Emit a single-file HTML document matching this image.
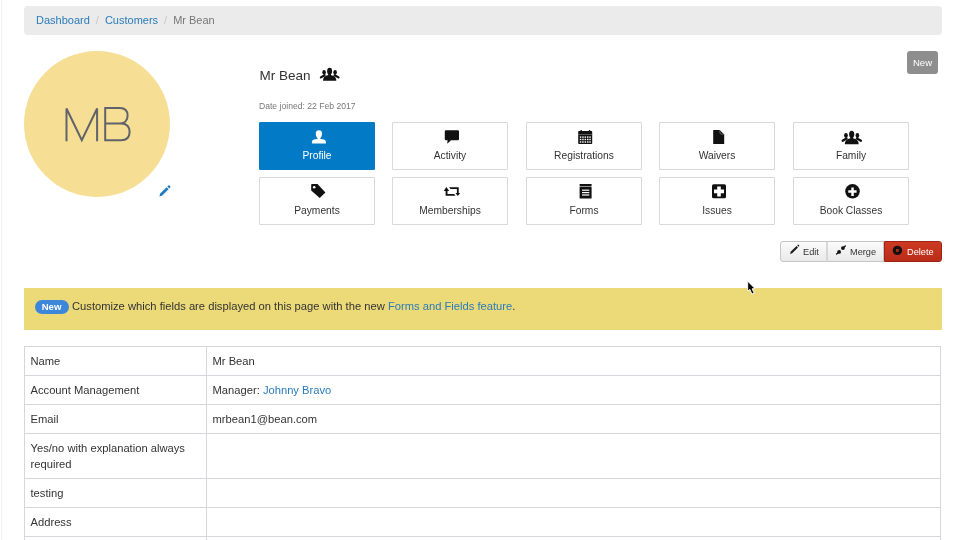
<!DOCTYPE html>
<html><head><meta charset="utf-8">
<style>
*{margin:0;padding:0;box-sizing:border-box;}
html,body{width:960px;height:540px;overflow:hidden;background:#fff;}
body{font-family:"Liberation Sans",sans-serif;color:#333;position:relative;will-change:transform;background:transparent;}
.abs{position:absolute;}
.leftline{left:1px;top:0;width:1px;height:540px;background:#f1f1f4;}
.crumb{left:24px;top:6px;width:918px;height:28.5px;background:#ebebeb;border-radius:4px;font-size:11px;line-height:28px;padding-left:12px;white-space:nowrap;}
.crumb a{color:#2a7cba;text-decoration:none;}
.crumb .sep{color:#c8c8c8;padding:0 6px;}
.crumb .act{color:#777;}
.avatar{left:24px;top:51px;width:146px;height:146px;border-radius:50%;background:#f7de95;}
.name{left:259.5px;top:67.5px;font-size:13.5px;color:#333;line-height:16px;}
.joined{left:259px;top:101px;font-size:8.6px;color:#777;line-height:10px;}
.tile{width:116px;height:48px;border:1px solid #d9d9d9;border-radius:1px;box-shadow:0 0 0.6px #e4e4e4;background:#fff;text-align:center;font-size:10.25px;color:#333;}
.tile .lbl{position:absolute;left:0;right:0;top:27px;line-height:12px;}
.tile svg{position:absolute;}
.tile.on{background:#037ac6;border-color:#037ac6;color:#fff;}
.newbtn{left:907px;top:51px;width:31px;height:23px;background:#8e8e8e;border-radius:3px;color:#fff;font-size:9.6px;text-align:center;line-height:24px;}
.btn{position:absolute;top:241px;height:21px;font-size:9.2px;line-height:20px;color:#333;}
.alert{left:24px;top:288px;width:918px;height:42px;background:#ecd978;font-size:11.2px;line-height:42px;color:#333;padding-left:48px;white-space:nowrap;}
.alert span.t{position:absolute;left:48px;top:11px;line-height:14px;}
.alert a{color:#2a7cba;text-decoration:none;}
.badge{left:34.5px;top:299.5px;width:34px;height:14.5px;border-radius:7.5px;background:#3c87d9;color:#fff;font-size:9.6px;font-weight:bold;text-align:center;line-height:13px;}
table{position:absolute;left:24px;top:346px;width:917px;border-collapse:collapse;font-size:11.2px;color:#333;}
td{border:1px solid #d6d6dc;padding:1px 6px 0 5.5px;vertical-align:middle;height:29px;line-height:15.4px;}
td.k{width:182px;}
td a{color:#2a7cba;text-decoration:none;}
</style></head><body>
<div class="abs leftline"></div>
<div class="abs crumb"><a>Dashboard</a><span class="sep">/</span><a>Customers</a><span class="sep">/</span><span class="act">Mr Bean</span></div>

<div class="abs avatar"></div>
<svg class="abs" style="left:0;top:0" width="200" height="200" viewBox="0 0 200 200"><g fill="none" stroke="#606369" stroke-width="2" stroke-linejoin="miter"><path d="M66.5 141.3 V108.5 L81.8 140.3 L97.1 108.5 V141.3"/><path d="M105.2 123.4 H120 C125.5 123.4 127.6 119.5 127.6 115.6 C127.6 111 125 108.1 120 108.1 H105.2 V140.3 H121 C126.8 140.3 129.6 137 129.6 132 C129.6 127 126.8 123.4 121 123.4"/></g></svg>
<svg class="abs" style="left:150px;top:180px" width="30" height="20" viewBox="0 0 30 20"><g fill="#1f7ac2"><path d="M9.4 16.4 L10.2 13.6 L16.6 7.2 L18.6 9.2 L12.2 15.6 Z"/><path d="M17.3 6.5 L18.3 5.5 Q18.9 5 19.5 5.6 L20.2 6.3 Q20.7 6.9 20.2 7.5 L19.3 8.5 Z"/></g></svg>

<div class="abs name">Mr Bean</div>
<svg class="abs" style="left:315px;top:64px" width="30" height="20" viewBox="0 0 30 20"><g fill="#111"><ellipse cx="14.6" cy="7.2" rx="2.5" ry="3.4"/><rect x="13.2" y="9" width="2.8" height="3"/><path d="M8 16.8 Q8 12.2 12.5 11.3 L16.7 11.3 Q21.3 12.2 21.3 16.8 Z"/><ellipse cx="9.1" cy="8.3" rx="1.8" ry="2.4"/><ellipse cx="20.1" cy="8.3" rx="1.8" ry="2.4"/></g><g stroke="#111" stroke-width="2.2" stroke-linecap="round"><path d="M5.9 13.4 L9.6 11.2"/><path d="M23.5 13.4 L19.6 11.2"/></g></svg>
<div class="abs joined">Date joined: 22 Feb 2017</div>

<div class="abs newbtn">New</div>

<!-- tiles row1 -->
<div class="abs tile on" style="left:259px;top:122px"><div class="lbl">Profile</div></div>
<div class="abs tile" style="left:392px;top:122px"><div class="lbl">Activity</div></div>
<div class="abs tile" style="left:526px;top:122px"><div class="lbl">Registrations</div></div>
<div class="abs tile" style="left:659px;top:122px"><div class="lbl">Waivers</div></div>
<div class="abs tile" style="left:793px;top:122px"><div class="lbl">Family</div></div>

<!-- tiles row2 -->
<div class="abs tile" style="left:259px;top:177px"><div class="lbl">Payments</div></div>
<div class="abs tile" style="left:392px;top:177px"><div class="lbl">Memberships</div></div>
<div class="abs tile" style="left:526px;top:177px"><div class="lbl">Forms</div></div>
<div class="abs tile" style="left:659px;top:177px"><div class="lbl">Issues</div></div>
<div class="abs tile" style="left:793px;top:177px"><div class="lbl">Book Classes</div></div>



<!-- button group -->
<div class="btn" style="left:780px;width:47px;border:1px solid #c6c6c6;border-radius:3px 0 0 3px;background:linear-gradient(#fbfbfb,#e9e9e9);padding-left:22px;">Edit</div>
<div class="btn" style="left:826px;width:58px;border:1px solid #c6c6c6;border-left:2px solid #d6d6d6;background:linear-gradient(#fbfbfb,#e9e9e9);padding-left:22px;">Merge</div>
<div class="btn" style="left:884px;width:58px;border:1px solid #9e2315;border-radius:0 3px 3px 0;background:linear-gradient(#cd3a22,#b92d19);color:#fff;padding-left:22px;">Delete</div>

<div class="abs alert"><span class="t">Customize which fields are displayed on this page with the new <a>Forms and Fields feature</a>.</span></div>
<div class="abs badge">New</div>

<table>
<tr><td class="k">Name</td><td>Mr Bean</td></tr>
<tr><td class="k">Account Management</td><td>Manager: <a>Johnny Bravo</a></td></tr>
<tr><td class="k">Email</td><td>mrbean1@bean.com</td></tr>
<tr><td class="k" style="height:45px">Yes/no with explanation always required</td><td></td></tr>
<tr><td class="k">testing</td><td></td></tr>
<tr><td class="k">Address</td><td></td></tr>
<tr><td class="k">&nbsp;</td><td></td></tr>
</table>

<svg class="abs" style="left:0;top:0" width="960" height="540" viewBox="0 0 960 540">
<!-- profile -->
<path fill="#fff" d="M318.9 130.2 C321.3 130.2 322 131.5 322 133.6 C322 135.8 321.4 137.4 320.3 138.2 L320.3 139 C323.6 139.4 325.9 140 325.9 141.5 V143.6 H311.9 V141.5 C311.9 140 314.2 139.4 317.5 139 L317.5 138.2 C316.4 137.4 315.8 135.8 315.8 133.6 C315.8 131.5 316.5 130.2 318.9 130.2 Z"/>
<!-- activity -->
<path fill="#111" d="M446 130.3 H457.8 Q459 130.3 459 131.5 V139 Q459 140.2 457.8 140.2 H451 L447.2 143.8 L447.6 140.2 H446 Q444.8 140.2 444.8 139 V131.5 Q444.8 130.3 446 130.3Z"/>
<!-- registrations -->
<g fill="#111"><rect x="578.2" y="131" width="14" height="13" rx="0.8"/><rect x="580.3" y="129.9" width="1.7" height="2.4" rx="0.8"/><rect x="588.7" y="129.9" width="1.7" height="2.4" rx="0.8"/></g>
<rect x="578.2" y="134.3" width="14" height="0.7" fill="#777"/>
<g fill="#fff"><rect x="579.8" y="136.4" width="1.5" height="1.4"/><rect x="582.2" y="136.4" width="1.5" height="1.4"/><rect x="584.6" y="136.4" width="1.5" height="1.4"/><rect x="587" y="136.4" width="1.5" height="1.4"/><rect x="589.3" y="136.4" width="1.5" height="1.4"/><rect x="579.8" y="138.8" width="1.5" height="1.4"/><rect x="582.2" y="138.8" width="1.5" height="1.4"/><rect x="584.6" y="138.8" width="1.5" height="1.4"/><rect x="587" y="138.8" width="1.5" height="1.4"/><rect x="589.3" y="138.8" width="1.5" height="1.4"/><rect x="579.8" y="141.3" width="1.5" height="1.4"/><rect x="582.2" y="141.3" width="1.5" height="1.4"/><rect x="584.6" y="141.3" width="1.5" height="1.4"/><rect x="587" y="141.3" width="1.5" height="1.4"/><rect x="589.3" y="141.3" width="1.5" height="1.4"/></g>
<!-- waivers -->
<path fill="#111" d="M713.2 129.9 H719.7 L724.2 134.4 V144 H713.2 Z"/>
<path fill="none" stroke="#888" stroke-width="0.7" d="M719.9 130.2 V132.6 Q719.9 134.1 721.4 134.1 H724"/>
<!-- family -->
<g transform="translate(836.5 126.8) scale(1.04)">
<g fill="#111"><ellipse cx="14.6" cy="7.2" rx="2.5" ry="3.4"/><rect x="13.2" y="9" width="2.8" height="3"/><path d="M8 16.8 Q8 12.2 12.5 11.3 L16.7 11.3 Q21.3 12.2 21.3 16.8 Z"/><ellipse cx="9.1" cy="8.3" rx="1.8" ry="2.4"/><ellipse cx="20.1" cy="8.3" rx="1.8" ry="2.4"/></g><g stroke="#111" stroke-width="2.2" stroke-linecap="round"><path d="M5.9 13.4 L9.6 11.2"/><path d="M23.5 13.4 L19.6 11.2"/></g>
</g>
<!-- payments -->
<path fill="#111" d="M311.8 184.1 H317.5 L325.4 192.6 L319.7 198.1 L311.2 190.6 V184.7 Q311.2 184.1 311.8 184.1Z"/>
<circle cx="314.2" cy="187.3" r="1.25" fill="#fff"/>
<!-- memberships -->
<path fill="#111" d="M446.4 187.1 L449.2 190.9 H447.5 V194 H454.1 L455.6 195.8 H445.6 V190.9 H443.7 Z"/>
<path fill="#111" d="M449.1 187.2 H458.7 V193 H460.2 L457.8 196 L455.4 193 H456.9 V189 H450.5 Z"/>
<!-- forms -->
<g fill="#111"><rect x="579.6" y="184.1" width="12" height="1.9" rx="0.4"/><rect x="579.6" y="186.9" width="12" height="11.6" rx="0.6"/></g>
<rect x="579.6" y="186" width="12" height="0.9" fill="#8a8a8a"/>
<g fill="#fff"><rect x="582" y="189.6" width="7.3" height="1.2"/><rect x="582" y="192" width="7.3" height="1.2"/><rect x="582" y="194.3" width="7.3" height="1.4" fill="#ddd"/></g>
<!-- issues -->
<rect x="712" y="184.3" width="14" height="14" rx="1.6" fill="#111"/>
<path fill="#fff" d="M717.2 186.4 H720.8 V189.6 H724 V193.2 H720.8 V196.4 H717.2 V193.2 H714 V189.6 H717.2Z"/>
<!-- book classes -->
<circle cx="852.5" cy="191.3" r="7.3" fill="#111"/>
<path fill="#fff" d="M851.3 187.5 H853.8 V190.2 H856.6 V192.8 H853.8 V195.9 H851.3 V192.8 H848.3 V190.2 H851.3Z"/>
<!-- edit pencil -->
<g fill="#1a1a1a"><path d="M790.1 254 L790.7 251.8 L796.5 246 L798 247.5 L792.2 253.3 Z"/><path d="M797.2 245.3 L797.8 244.7 Q798.2 244.4 798.6 244.8 L799.2 245.4 Q799.5 245.8 799.2 246.2 L798.7 246.8 Z"/></g>
<!-- merge -->
<g fill="#111"><circle cx="842.9" cy="248.1" r="1.9"/><circle cx="839.1" cy="251.9" r="1.9"/></g>
<g stroke="#111" stroke-width="1.4" stroke-linecap="round"><path d="M843.5 247.5 L845.3 245.9"/><path d="M838.5 252.5 L836.6 254"/></g>
<!-- delete -->
<circle cx="897.4" cy="250.4" r="4.7" fill="#151010"/>
<rect x="896" y="249" width="2.8" height="2.8" fill="#a82a1c"/>
</svg>
<svg class="abs" style="left:746px;top:280px" width="14" height="18" viewBox="0 0 14 18"><path d="M1.7 1.2 L1.7 11.2 L3.9 9.4 L5.9 14.1 L8.2 13.1 L6.1 8.8 L9 8.6 Z" fill="#000" stroke="#fff" stroke-width="0.9" stroke-linejoin="round"/></svg>
</body></html>
